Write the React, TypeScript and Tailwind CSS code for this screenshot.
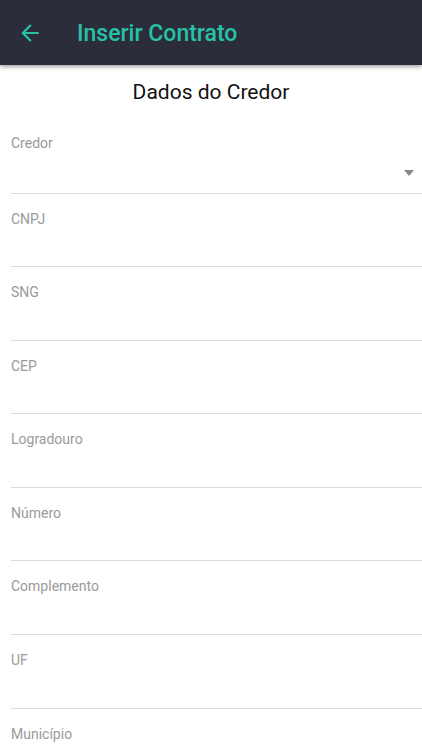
import React from "react";

const fields = ["CNPJ", "SNG", "CEP", "Logradouro", "Número", "Complemento", "UF", "Município"];

export default function App() {
  return (
    <div className="w-[422px] h-[750px] overflow-hidden bg-white" style={{ fontFamily: "Roboto, 'Noto Sans', sans-serif" }}>
      <div className="h-[65px] bg-[#2c2d3a] flex items-center shadow-[0_2px_4px_rgba(0,0,0,0.35)] relative z-10">
        <svg className="ml-[17px] mt-[1px]" width="26" height="26" viewBox="0 0 24 24">
          <path d="M20 11H7.83l5.59-5.59L12 4l-8 8 8 8 1.41-1.41L7.83 13H20v-2z" fill="#26c2a6" />
        </svg>
        <span className="ml-[34px] mt-[2px] text-[23px] font-medium text-[#26c2a6] leading-none">Inserir Contrato</span>
      </div>
      <div className="text-center text-[21px] text-[#111] mt-[15px] leading-[24px]">Dados do Credor</div>
      <div className="pl-[11px] mt-[16px]">
        <div className="h-[73.5px] border-b border-[#dcdcdc] relative">
          <div className="pt-[15px] text-[14px] text-[#9a9a9a] leading-[16px]">Credor</div>
          <div className="absolute right-[8px] top-[50px] w-0 h-0 border-l-[5.5px] border-r-[5.5px] border-t-[6px] border-l-transparent border-r-transparent border-t-[#888]" />
        </div>
        {fields.map((f) => (
          <div key={f} className="h-[73.6px] border-b border-[#dcdcdc]">
            <div className="pt-[17px] text-[14px] text-[#9a9a9a] leading-[16px]">{f}</div>
          </div>
        ))}
      </div>
    </div>
  );
}
